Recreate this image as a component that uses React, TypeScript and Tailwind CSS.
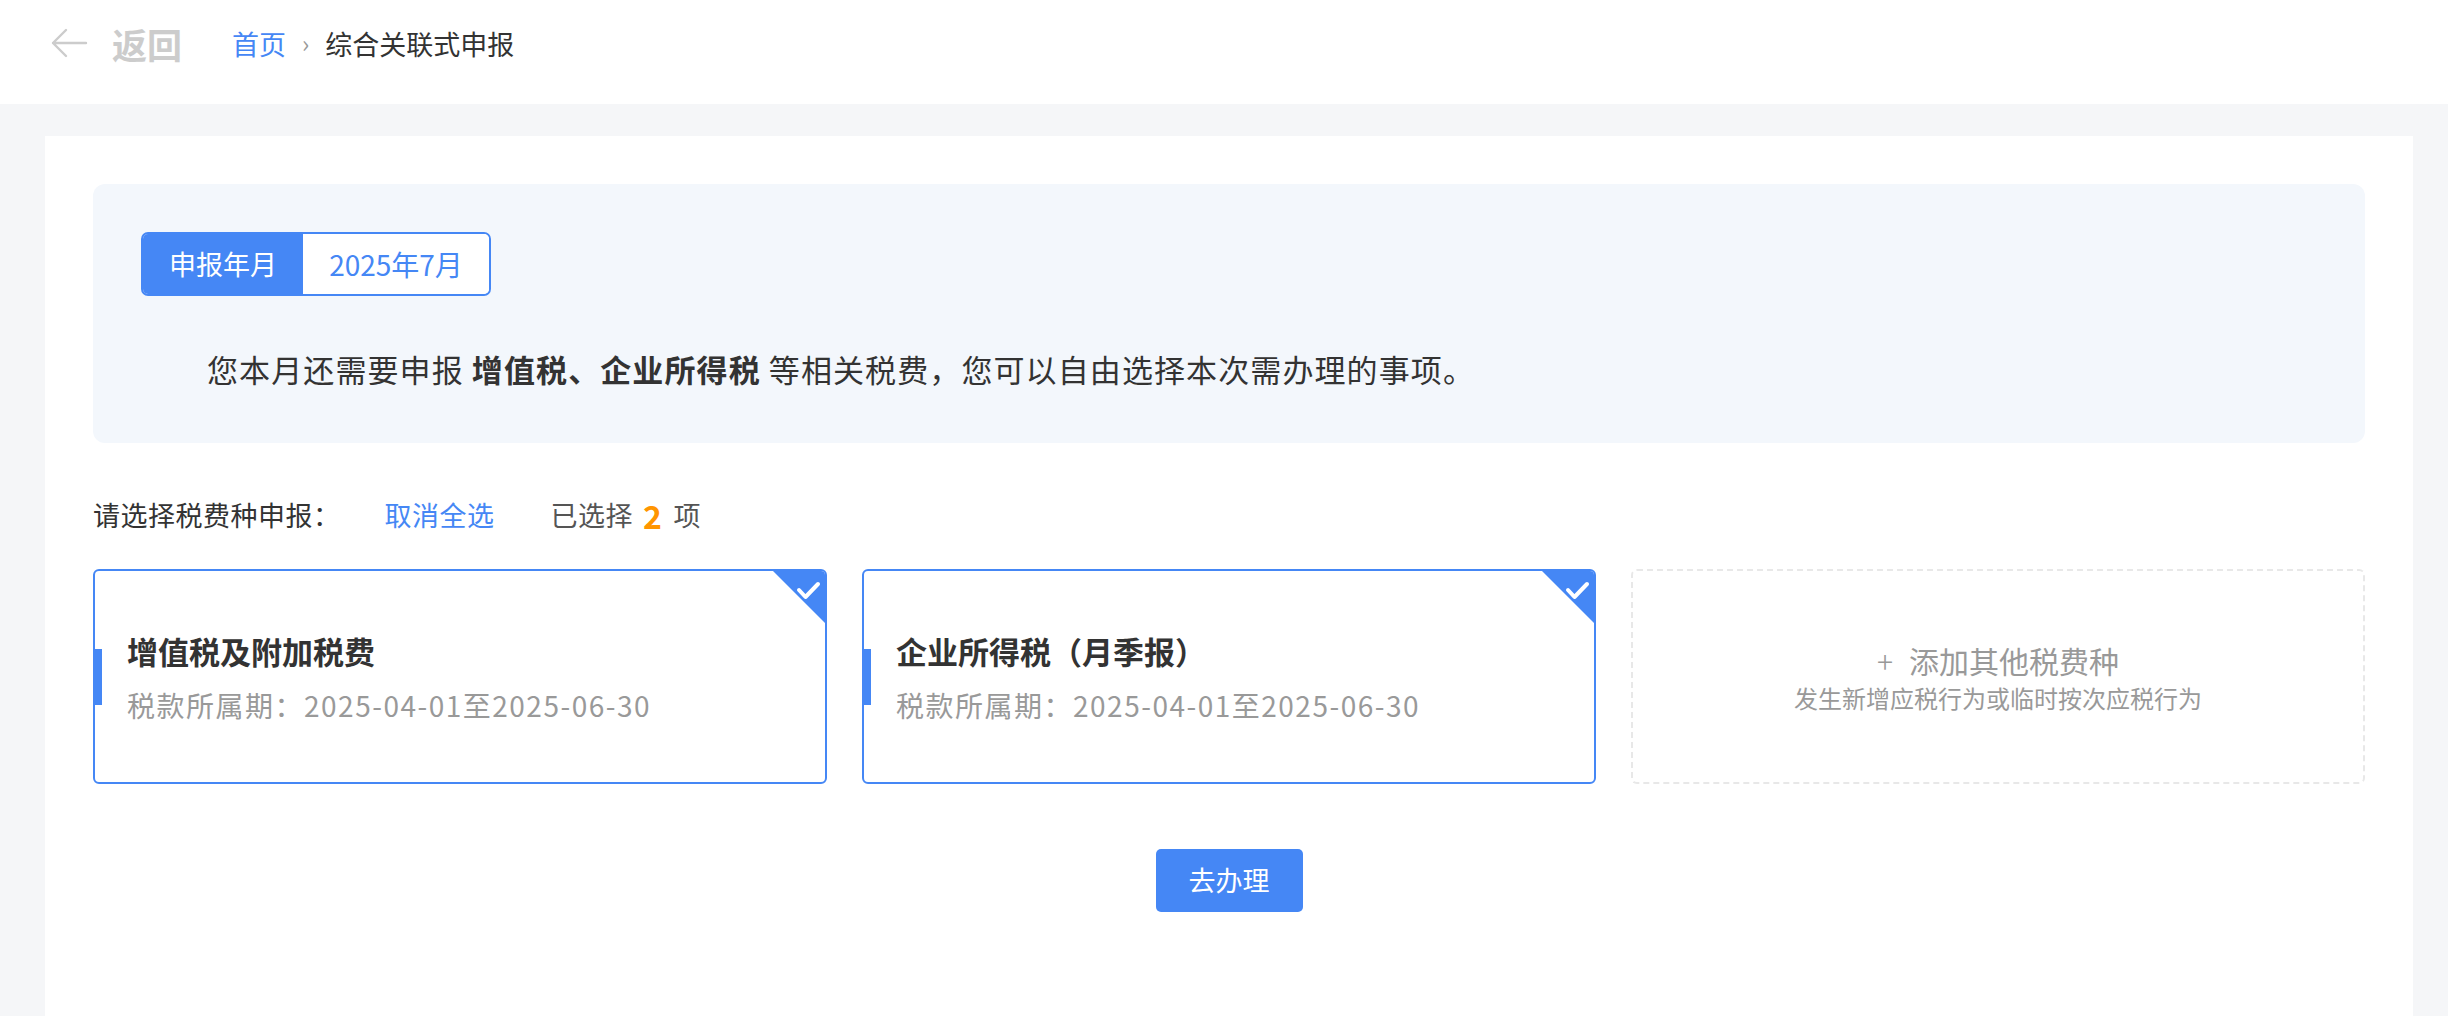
const taxes = [
  { name: '增值税及附加税费', period: '2025-04-01至2025-06-30' },
  { name: '企业所得税（月季报）', period: '2025-04-01至2025-06-30' },
];

function BackArrow() {
  return (
    <svg className="h-[30px] w-[37px]" viewBox="0 0 37 30" fill="none" stroke="#cccccc" strokeWidth="2.4" strokeLinecap="round" strokeLinejoin="round">
      <path d="M2 15 H35 M15 2 L2 15 L15 28" />
    </svg>
  );
}

function CheckCorner() {
  return (
    <svg className="absolute top-0 right-0 h-[52px] w-[52px]" viewBox="0 0 52 52">
      <polygon points="0,0 52,0 52,52" fill="#4587f5" />
      <path d="M26 19 L32.5 26 L45 13" fill="none" stroke="#fff" strokeWidth="4" strokeLinecap="round" strokeLinejoin="round" />
    </svg>
  );
}

export default function App() {
  return (
    <div className="min-h-screen w-full bg-[#f5f6f8] font-['Noto_Sans_CJK_SC','Noto_Sans',sans-serif] text-[#333]">
      {/* Top bar */}
      <div className="flex h-[104px] items-center bg-white pb-[18px] pl-[51px]">
        <BackArrow />
        <span className="ml-[24px] text-[35px] font-bold leading-none text-[#cccccc]">返回</span>
        <span className="ml-[50px] text-[27px] leading-none text-[#4587f5]">首页</span>
        <span className="ml-[16px] text-[24px] leading-none text-[#999]">›</span>
        <span className="ml-[16px] text-[27px] leading-none text-[#333]">综合关联式申报</span>
      </div>

      <div className="pt-[32px] pl-[45px] pr-[35px]">
        <div className="h-[880px] bg-white px-12 pt-12">
          {/* Notice panel */}
          <div className="h-[259px] rounded-xl bg-[#f3f7fc] px-12 pt-12">
            <div className="flex h-[64px] w-[350px] overflow-hidden rounded-[7px] border-2 border-[#4587f5]">
              <div className="flex w-[160px] items-center justify-center bg-[#4587f5] text-[27px] text-white">申报年月</div>
              <div className="flex flex-1 items-center justify-center bg-white text-[28px] text-[#4587f5]">2025年7月</div>
            </div>
            <p className="mt-[53px] ml-[66px] text-[31px] leading-[40px] tracking-[1.1px] text-[#333]">
              您本月还需要申报 <span className="font-bold">增值税、企业所得税</span> 等相关税费，您可以自由选择本次需办理的事项。
            </p>
          </div>

          {/* Selection summary */}
          <div className="mt-[52px] flex h-[40px] items-center text-[27px] tracking-[0.5px]">
            <span className="text-[#333]">请选择税费种申报：</span>
            <span className="ml-[44px] text-[#4587f5]">取消全选</span>
            <span className="ml-[56px] text-[#555]">已选择</span>
            <span className="ml-[10px] text-[32px] font-bold text-[#ff9500]">2</span>
            <span className="ml-[11px] text-[#555]">项</span>
          </div>

          {/* Tax cards */}
          <div className="mt-[34px] grid grid-cols-3 gap-[35px]">
            {taxes.map((t) => (
              <div key={t.name} className="relative h-[215px] overflow-hidden rounded-[6px] border-2 border-[#4587f5] bg-white pl-[32px] pt-[60px]">
                <div className="absolute -left-[2px] top-[78px] h-[56px] w-[9px] bg-[#4587f5]" />
                <CheckCorner />
                <p className="text-[31px] font-bold leading-[40px] text-[#333]">{t.name}</p>
                <p className="mt-[14px] text-[28px] leading-[40px] tracking-[1.5px] text-[#999]">税款所属期：{t.period}</p>
              </div>
            ))}
            <div className="flex h-[215px] flex-col items-center justify-center rounded-[6px] border-2 border-dashed border-[#e8e8e8] bg-white">
              <p className="text-[30px] leading-[40px] text-[#999]">
                <span className="mr-[16px] font-light">+</span>添加其他税费种
              </p>
              <p className="mt-[2px] text-[24px] leading-[32px] text-[#999]">发生新增应税行为或临时按次应税行为</p>
            </div>
          </div>

          <div className="mt-[65px] flex justify-center">
            <button className="h-[63px] w-[147px] rounded-[5px] bg-[#4587f5] text-[27px] text-white">去办理</button>
          </div>
        </div>
      </div>
    </div>
  );
}
